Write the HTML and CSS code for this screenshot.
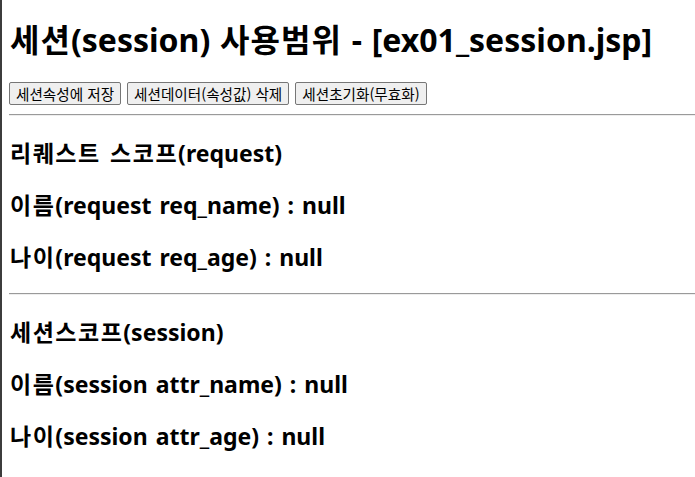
FILE: index.html
```html
<!DOCTYPE html>
<html lang="ko">
<head>
<meta charset="utf-8">
<title>ex01_session.jsp</title>
<link rel="stylesheet" href="styles.css">
</head>
<body>
<div class="page">
  <h1 class="title"><span class="ko">세션</span>(session) <span class="ko">사용범위</span> - [ex01_session.jsp]</h1>
  <div class="actions">
    <button class="btn" type="button">세션속성에 저장</button>
    <button class="btn" type="button">세션데이터(속성값) 삭제</button>
    <button class="btn" type="button">세션초기화(무효화)</button>
  </div>
  <hr class="rule">
  <h3 class="line"><span class="ko">리퀘스트 스코프</span>(request)</h3>
  <h3 class="line"><span class="ko">이름</span>(request req_name) : null</h3>
  <h3 class="line"><span class="ko">나이</span>(request req_age) : null</h3>
  <hr class="rule">
  <h3 class="line"><span class="ko">세션스코프</span>(session)</h3>
  <h3 class="line"><span class="ko">이름</span>(session attr_name) : null</h3>
  <h3 class="line"><span class="ko">나이</span>(session attr_age) : null</h3>
</div>
</body>
</html>
```
FILE: styles.css
```css
html, body {
  margin: 0;
  padding: 0;
  height: 100%;
  background: #fff;
}
body {
  font-family: "Noto Sans", "Noto Sans CJK KR", sans-serif;
  color: #000;
}
.page {
  box-sizing: border-box;
  min-height: 100%;
  border-left: 2px solid #3c3c3c;
  padding: 1px 0 0 7px;
  overflow: hidden;
}
.title {
  font-size: 32px;
  font-weight: 700;
  line-height: 42px;
  margin: 18px 0 21px 1px;
  word-spacing: 1.5px;
  white-space: nowrap;
}
.title .ko {
  letter-spacing: 1px;
}
.actions {
  display: flex;
  gap: 6px;
  height: 23px;
}
.btn {
  font-family: "Noto Sans CJK KR", sans-serif;
  font-size: 14.6px;
  line-height: 19px;
  height: 23px;
  padding: 1px 6px;
  border: 1px solid #767676;
  border-radius: 2px;
  background: #efefef;
  color: #000;
}
.rule {
  margin: 9px 0 0 0;
  border: 0;
  border-top: 1px solid #9a9a9a;
  border-bottom: 1px solid #eeeeee;
  height: 0;
}
.line {
  font-size: 23px;
  font-weight: 700;
  line-height: 30px;
  margin: 22px 0 21px 1px;
  word-spacing: 2px;
  white-space: nowrap;
}
.line .ko {
  letter-spacing: 1.5px;
}
```
